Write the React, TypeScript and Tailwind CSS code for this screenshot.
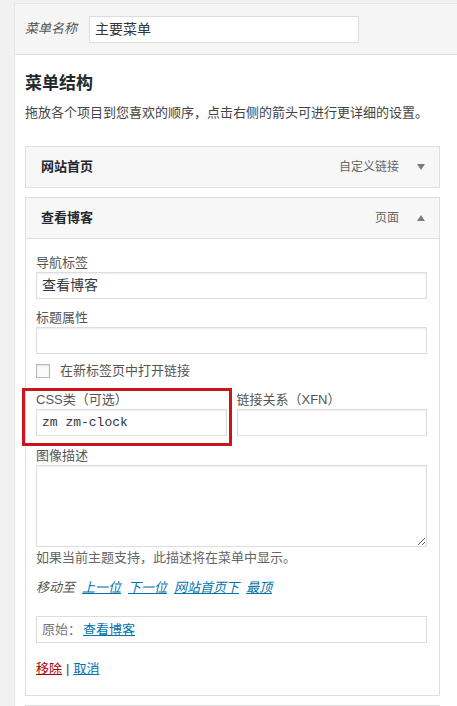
import type { FC, ReactNode } from 'react';

const font = { fontFamily: '"Liberation Sans", "Noto Sans CJK SC", sans-serif' };

const Arrow: FC<{ up?: boolean }> = ({ up }) => (
  <svg width="10" height="8" viewBox="0 0 10 8" className="ml-[17px]">
    {up ? <polygon points="1,7 9,7 5,1" fill="#787c82" /> : <polygon points="1,1 9,1 5,7" fill="#787c82" />}
  </svg>
);

const ItemHead: FC<{ title: string; type: string; up?: boolean }> = ({ title, type, up }) => (
  <div className="flex h-[40px] items-center bg-[#f7f7f7] pl-[15px] pr-[13px]">
    <span className="text-[13px] font-bold text-[#23282d]">{title}</span>
    <span className="ml-auto text-[12px] text-[#666]">{type}</span>
    <Arrow up={up} />
  </div>
);

const Label: FC<{ children: ReactNode }> = ({ children }) => (
  <div className="text-[13px] leading-[18px] text-[#555]">{children}</div>
);

const Input: FC<{ value?: string; mono?: boolean }> = ({ value, mono }) => (
  <div
    className={`flex h-[27px] items-center border border-[#ddd] bg-white px-[5px] text-[#32373c] shadow-[inset_0_1px_2px_rgba(0,0,0,0.07)] ${
      mono ? 'text-[13px]' : 'text-[14px]'
    }`}
    style={mono ? { fontFamily: '"Liberation Mono", monospace' } : undefined}
  >
    {value}
  </div>
);

const Link: FC<{ children: ReactNode; italic?: boolean; red?: boolean }> = ({ children, italic, red }) => (
  <a href="#" className={`underline ${italic ? 'italic' : ''} ${red ? 'text-[#a00]' : 'text-[#0073aa]'}`}>
    {children}
  </a>
);

export default function App() {
  return (
    <div className="h-[706px] overflow-hidden bg-[#f1f1f1] pl-[14px] pt-[3px] text-[#444]" style={font}>
      <div className="border-l border-t border-[#e5e5e5] bg-white">
        <div className="flex h-[51px] items-center border-b border-[#dfdfdf] bg-[#f5f5f5] pl-[10px]">
          <span className="w-[64px] text-[13px] italic text-[#555]">菜单名称</span>
          <div className="flex h-[27px] w-[270px] items-center border border-[#ddd] bg-white px-[5px] text-[14px] text-[#32373c]">
            主要菜单
          </div>
        </div>

        <div className="pl-[10px] pr-[17px]">
          <h3 className="mt-[17px] text-[17px] font-bold leading-[24px] text-[#23282d]">菜单结构</h3>
          <p className="mt-[8px] text-[13px] leading-[18px] text-[#444]">
            拖放各个项目到您喜欢的顺序，点击右侧的箭头可进行更详细的设置。
          </p>

          <div className="mt-[24px] border border-[#dfdfdf]">
            <ItemHead title="网站首页" type="自定义链接" />
          </div>

          <div className="mt-[9px] border border-[#dfdfdf]">
            <ItemHead title="查看博客" type="页面" up />
            <div className="border-t border-[#dfdfdf] bg-white pb-[17px] pl-[10px] pr-[12px] pt-[15px]">
              <Label>导航标签</Label>
              <Input value="查看博客" />

              <div className="mt-[10px]">
                <Label>标题属性</Label>
                <Input />
              </div>

              <div className="mt-[8px] flex h-[18px] items-center">
                <div className="h-[14px] w-[14px] border border-[#b4b9be] bg-[#fbfbfb] shadow-[inset_0_1px_2px_rgba(0,0,0,0.1)]" />
                <span className="ml-[10px] text-[13px] text-[#555]">在新标签页中打开链接</span>
              </div>

              <div className="mt-[11px] grid grid-cols-2 gap-[10px]">
                <div className="relative">
                  <div className="pointer-events-none absolute left-[-14px] top-[-3px] h-[58px] w-[210px] border-[3px] border-[#c9151b]" />
                  <Label>CSS类（可选）</Label>
                  <Input value="zm zm-clock" mono />
                </div>
                <div>
                  <Label>链接关系（XFN）</Label>
                  <Input />
                </div>
              </div>

              <div className="mt-[11px]">
                <Label>图像描述</Label>
                <textarea className="block h-[82px] w-full border border-[#ddd] bg-white shadow-[inset_0_1px_2px_rgba(0,0,0,0.07)]" />
              </div>

              <p className="mt-[2px] text-[13px] leading-[18px] text-[#666]">如果当前主题支持，此描述将在菜单中显示。</p>

              <div className="mt-[12px] flex gap-[7px] text-[13px] leading-[18px]">
                <span className="italic text-[#555]">移动至</span>
                <Link italic>上一位</Link>
                <Link italic>下一位</Link>
                <Link italic>网站首页下</Link>
                <Link italic>最顶</Link>
              </div>

              <div className="mt-[19px] flex h-[27px] items-center border border-[#ddd] pl-[5px] text-[13px]">
                <span className="text-[#777]">原始：</span>
                <span className="ml-[2px]">
                  <Link>查看博客</Link>
                </span>
              </div>

              <div className="mt-[17px] text-[13px] leading-[18px]">
                <Link red>移除</Link>
                <span className="mx-[4px] text-[#444]">|</span>
                <Link>取消</Link>
              </div>
            </div>
          </div>

          <div className="mt-[9px] h-[40px] border border-[#dfdfdf] bg-[#f7f7f7]" />
        </div>
      </div>
    </div>
  );
}
